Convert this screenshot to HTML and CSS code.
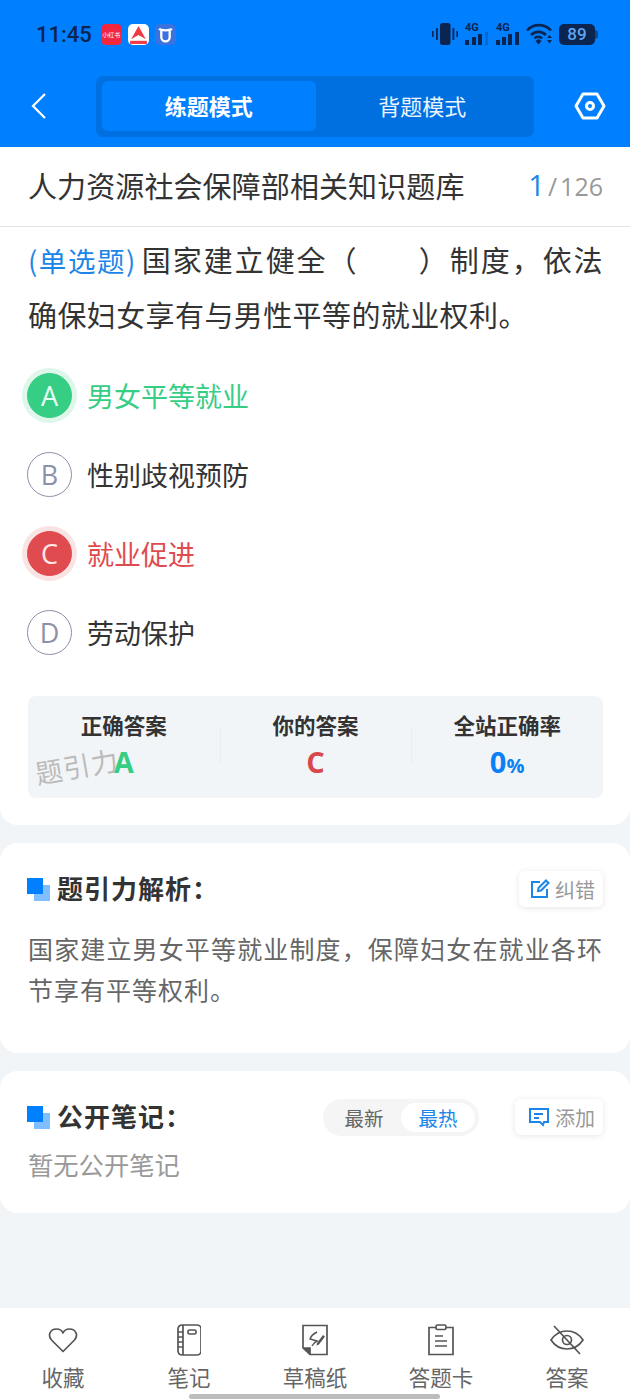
FILE: index.html
```html
<!DOCTYPE html>
<html lang="zh-CN">
<head>
    <meta charset="UTF-8">
    <meta name="viewport" content="width=device-width, initial-scale=1.0">
    <title>题引力</title>
    <link rel="stylesheet" href="styles.css">
</head>
<body>
<div class="page">
    <header class="top">
        <div class="status">
            <span class="time">11:45</span>
            <span class="app app-red">小红书</span>
            <span class="app app-white">
                <svg width="21" height="21" viewBox="0 0 20 20"><path d="M10 2 17 14.500 10 10.500 3 14.500z" fill="#ee3b46"/><rect x="2" y="16" width="16" height="3" fill="#ee3b46"/></svg>
            </span>
            <span class="app app-blue">
                <svg width="21" height="21" viewBox="0 0 20 20" fill="none" stroke="#fff" stroke-width="2.200"><path d="M6 6v6.500a4 4 0 0 0 8 0V6M4 4.500c1 1.500 3 1.500 6 1.500s5 0 6-1.500"/></svg>
            </span>
            <span class="status-right">
                <svg class="vib" width="26" height="22" viewBox="0 0 26 22" fill="#0b2450"><rect x="8" y="0" width="10.500" height="22" rx="2.500"/><rect x="0" y="8" width="1.600" height="6"/><rect x="4" y="5" width="1.800" height="12"/><rect x="20.500" y="5" width="1.800" height="12"/><rect x="24.400" y="8" width="1.600" height="6"/></svg>
                <span class="signal"><i class="g">4G</i><svg width="25" height="13" viewBox="0 0 25 13" fill="#0b2450"><rect x="1" y="8" width="4" height="5"/><rect x="8" y="5" width="4" height="8"/><rect x="14" y="2" width="4" height="11"/><rect x="21" y="0" width="3" height="13" opacity=".25"/></svg></span>
                <span class="signal"><i class="g">4G</i><svg width="25" height="13" viewBox="0 0 25 13" fill="#0b2450"><rect x="1" y="8" width="4" height="5"/><rect x="7" y="5" width="4" height="8"/><rect x="13" y="2" width="4" height="11"/><rect x="20" y="0" width="4" height="13"/></svg></span>
                <svg width="27" height="22" viewBox="0 0 27 22" fill="none" stroke="#0b2450" stroke-width="2.600"><path d="M1 7.500a16 16 0 0 1 24 0M5 12a10.500 10.500 0 0 1 15 0M8.500 15.500a5 5 0 0 1 7.500 0"/><path d="m9.500 18 3-2 3 2-3 3.500z" fill="#0b2450" stroke="none"/><path d="m21 15 2.500-3 2.500 3zM21 17h5l-2.500 3.500z" fill="#0b2450" stroke="none"/></svg>
                <span class="battery">89<i class="cap"></i></span>
            </span>
        </div>
        <nav class="nav">
            <svg class="back" width="18" height="28" viewBox="0 0 18 28" fill="none" stroke="#fff" stroke-width="2.200"><path d="M15 2 3 14l12 12"/></svg>
            <div class="tabs">
                <div class="tab tab-on">练题模式</div>
                <div class="tab">背题模式</div>
            </div>
            <svg class="gear" width="32" height="28" viewBox="0 0 32 28" fill="none" stroke="#fff" stroke-width="3"><path d="M9 2h14l7 12-7 12H9L2 14z" stroke-linejoin="round"/><circle cx="16" cy="14" r="3.500"/></svg>
        </nav>
    </header>

    <section class="card card-main">
        <div class="bank">
            <span class="bank-name">人力资源社会保障部相关知识题库</span>
            <span class="count"><b>1</b><em>/</em>126</span>
        </div>
        <p class="question"><span class="q-type">(单选题)</span>国家建立健全（&emsp;&emsp;）制度，依法确保妇女享有与男性平等的就业权利。</p>
        <ul class="options">
            <li class="option right"><span class="mark">A</span>男女平等就业</li>
            <li class="option"><span class="mark">B</span>性别歧视预防</li>
            <li class="option wrong"><span class="mark">C</span>就业促进</li>
            <li class="option"><span class="mark">D</span>劳动保护</li>
        </ul>
        <div class="result">
            <div class="cell"><div class="cell-title">正确答案</div><div class="cell-val green">A</div><span class="watermark">题引力</span></div>
            <div class="cell"><div class="cell-title">你的答案</div><div class="cell-val red">C</div></div>
            <div class="cell"><div class="cell-title">全站正确率</div><div class="cell-val blue">0<small>%</small></div></div>
        </div>
    </section>

    <section class="card card-analysis">
        <div class="head">
            <span class="squares"></span>
            <h2>题引力解析：</h2>
            <span class="mini-btn">
                <svg width="20" height="20" viewBox="0 0 20 20" fill="none" stroke="#1c86e8" stroke-width="2"><path d="M10 3H2v15h15v-8"/><path d="m8 12 .5-3L16 1.500 18.500 4 11 11.500z"/></svg>
                纠错
            </span>
        </div>
        <p class="analysis">国家建立男女平等就业制度，保障妇女在就业各环节享有平等权利。</p>
    </section>

    <section class="card card-notes">
        <div class="head">
            <span class="squares"></span>
            <h2>公开笔记：</h2>
            <div class="switch"><span>最新</span><span class="switch-on">最热</span></div>
            <span class="mini-btn">
                <svg width="22" height="20" viewBox="0 0 22 20" fill="none" stroke="#1c86e8" stroke-width="2"><path d="M2 2h18v13h-4l-1 3-3-3H2z"/><path d="M6 7h9M6 11h5"/></svg>
                添加
            </span>
        </div>
        <p class="empty">暂无公开笔记</p>
    </section>

    <footer class="bar">
        <div class="bar-item">
            <svg width="30" height="26" viewBox="0 0 30 26" fill="none" stroke="#555" stroke-width="1.700"><path d="M15 24.500 3.500 13C-.5 8.500 2 2 8.500 2c3 0 5.500 1.500 6.500 4 1-2.500 3.500-4 6.500-4 6.500 0 9 6.500 5 11z" stroke-linejoin="round"/></svg>
            <span>收藏</span>
        </div>
        <div class="bar-item">
            <svg width="24" height="32" viewBox="0 0 24 32" fill="none" stroke="#555" stroke-width="1.700"><rect x="1" y="1" width="23" height="30" rx="4"/><path d="M6 1v30M1 8h5M1 13h5M1 18h5M1 23h5"/><rect x="11" y="6" width="8" height="4" rx="1.500"/></svg>
            <span>笔记</span>
        </div>
        <div class="bar-item">
            <svg width="26" height="32" viewBox="0 0 26 32" fill="none" stroke="#555" stroke-width="1.700"><path d="M8 30.500H25V1.500H1V24z"/><path d="M1 24h7v6.500" fill="#555"/><path d="M15 8c-4 2-6 4-7 7l7 2c-2 1-4 3-5 5" stroke-width="1.400"/><path d="m15 19 6-8 2 1.500-6 8-2.500 1z" fill="#555" stroke="none"/></svg>
            <span>草稿纸</span>
        </div>
        <div class="bar-item">
            <svg width="26" height="32" viewBox="0 0 26 32" fill="none" stroke="#555" stroke-width="1.700"><path d="M8 3.500H1v27h24v-27h-7"/><rect x="8" y="1" width="10" height="4.500" rx="1.500"/><path d="M7 12h8M7 17h12M7 22h12"/></svg>
            <span>答题卡</span>
        </div>
        <div class="bar-item">
            <svg width="34" height="32" viewBox="0 0 34 32" fill="none" stroke="#555" stroke-width="1.700"><path d="M1 16c4-6 9-9 16-9s12 3 16 9c-4 6-9 9-16 9S5 22 1 16z"/><circle cx="17" cy="16" r="4.500"/><path d="M4 2l26 28"/></svg>
            <span>答案</span>
        </div>
        <div class="home-line"></div>
    </footer>
</div>
</body>
</html>
```

FILE: styles.css
```css
* {
    box-sizing: border-box;
}
html, body {
    margin: 0;
    padding: 0;
}
body {
    font-family: "Noto Sans CJK SC", "Noto Sans", sans-serif;
    background: #f2f5f8;
    color: #333;
}
.page {
    width: 630px;
    height: 1400px;
    display: flex;
    flex-direction: column;
    overflow: hidden;
}

/* top */
.top {
    height: 147px;
    background: #0080ff;
    padding: 0 25px 0 28px;
    flex-shrink: 0;
}
.status {
    height: 68px;
    display: flex;
    align-items: center;
    gap: 6px;
    color: #0b2450;
}
.time {
    font-family: Roboto, sans-serif;
    font-size: 22px;
    font-weight: 500;
    margin: 0 3px 0 8px;
}
.app {
    width: 21px;
    height: 21px;
    border-radius: 5px;
    overflow: hidden;
    display: flex;
    align-items: center;
    justify-content: center;
}
.app-red {
    background: #f3263f;
    color: #fff;
    font-size: 6px;
    white-space: nowrap;
}
.app-white {
    background: #fff;
}
.app-blue {
    background: #3a72e0;
}
.status-right {
    margin-left: auto;
    display: flex;
    align-items: center;
    gap: 6px;
    padding-right: 10px;
}
.signal {
    display: flex;
    flex-direction: column;
    align-items: flex-start;
    width: 25px;
    margin-top: -1px;
}
.signal svg {
    margin-top: -1px;
}
.g {
    font-family: Roboto, sans-serif;
    font-style: normal;
    font-weight: 700;
    font-size: 11px;
    line-height: 10px;
    margin-left: 1px;
}
.battery {
    position: relative;
    width: 36px;
    height: 21px;
    border-radius: 5px;
    background: #0b2450;
    color: #5fa6ee;
    font-family: Roboto, sans-serif;
    font-size: 17px;
    font-weight: 500;
    line-height: 21px;
    text-align: center;
}
.cap {
    position: absolute;
    right: -3px;
    top: 6px;
    width: 3px;
    height: 9px;
    border-radius: 0 3px 3px 0;
    background: #0b4a95;
}
.nav {
    display: flex;
    align-items: center;
    height: 62px;
    margin-top: 7px;
}
.back {
    margin: 0 0 0 2px;
}
.tabs {
    display: flex;
    width: 438px;
    height: 61px;
    margin-left: 48px;
    padding: 5px 5px 6px 6px;
    background: #0070e0;
    border-radius: 7px;
}
.tab {
    flex: 1;
    display: flex;
    align-items: center;
    justify-content: center;
    padding-bottom: 2px;
    color: #eaf4ff;
    font-size: 22px;
    border-radius: 6px;
}
.tab-on {
    background: #0080ff;
    color: #fff;
    font-weight: 700;
}
.gear {
    margin-left: auto;
    margin-right: -1px;
}

/* cards */
.card {
    background: #fff;
    flex-shrink: 0;
}
.card-main {
    height: 678px;
    border-radius: 0 0 18px 18px;
    padding: 0 27px 0 28px;
}
.bank {
    display: flex;
    align-items: center;
    justify-content: space-between;
    height: 80px;
    margin: 0 -27px 0 -28px;
    padding: 0 27px 4px 28px;
    border-bottom: 1px solid #e4e4e4;
}
.bank-name {
    font-size: 29px;
    letter-spacing: 0.100px;
    color: #333;
}
.count {
    font-family: "Open Sans", sans-serif;
    font-size: 25px;
    color: #999;
}
.count b {
    font-weight: 400;
    font-size: 29px;
    color: #1c86e8;
}
.count em {
    font-style: normal;
    margin: 0 3px;
}
.question {
    margin: 5px 0 0;
    font-size: 29px;
    letter-spacing: 0.400px;
    line-height: 54px;
    text-align: justify;
    color: #333;
}
.q-type {
    font-size: 27.500px;
    letter-spacing: 0;
    color: #1c86e8;
    margin-right: 5px;
}
.options {
    list-style: none;
    margin: 15px 0 0;
    padding: 0;
}
.option {
    display: flex;
    align-items: center;
    gap: 15px;
    height: 79px;
    font-size: 27px;
    color: #333;
}
.mark {
    width: 45px;
    height: 45px;
    margin-left: -1px;
    border-radius: 50%;
    border: 1px solid #8d90aa;
    color: #8d90aa;
    font-family: "Open Sans", sans-serif;
    font-size: 27px;
    display: flex;
    align-items: center;
    justify-content: center;
}
.right {
    color: #36cd85;
}
.right .mark {
    background: #36cd85;
    border-color: #36cd85;
    color: #e8fff4;
    box-shadow: 0 0 0 5px #dff7eb;
}
.wrong {
    color: #e04b4f;
}
.wrong .mark {
    background: #e04b4f;
    border-color: #e04b4f;
    color: #ffe9e9;
    box-shadow: 0 0 0 5px #fae3e3;
}
.result {
    display: flex;
    height: 102px;
    margin-top: 24px;
    background: #f2f5f8;
    border-radius: 8px;
}
.cell {
    flex: 1;
    position: relative;
    text-align: center;
    padding-top: 14px;
}
.cell + .cell::before {
    content: "";
    position: absolute;
    left: 0;
    top: 32px;
    height: 36px;
    border-left: 1px solid #e9ecef;
}
.cell-title {
    font-size: 21.500px;
    line-height: 30px;
    font-weight: 700;
    color: #333;
}
.cell-val {
    font-family: "Open Sans", sans-serif;
    font-size: 29px;
    line-height: 36px;
    margin-top: 4px;
    font-weight: 700;
}
.cell-val small {
    font-size: 20px;
}
.green {
    color: #36cd85;
}
.red {
    color: #d9474b;
}
.blue {
    color: #0a80f5;
}
.watermark {
    position: absolute;
    left: 7px;
    top: 54px;
    font-size: 27px;
    line-height: 32px;
    color: #bbb;
    letter-spacing: 1px;
    transform: rotate(-10deg);
}
.card-analysis {
    margin-top: 18px;
    height: 210px;
    border-radius: 18px;
    padding: 27px 27px 0 28px;
}
.card-notes {
    margin-top: 18px;
    height: 142px;
    border-radius: 18px;
    padding: 27px 27px 0 28px;
}
.head {
    display: flex;
    align-items: center;
    height: 38px;
}
.squares {
    width: 23px;
    height: 23px;
    margin-left: -1px;
    position: relative;
    background: linear-gradient(#7fbfff, #7fbfff) 7px 7px / 16px 16px no-repeat;
    margin-right: 7px;
}
.squares::before {
    content: "";
    position: absolute;
    left: 0;
    top: 0;
    width: 16px;
    height: 16px;
    background: #0080ff;
}
.head h2 {
    margin: 0 0 4px;
    font-size: 26px;
    font-weight: 700;
    color: #333;
    letter-spacing: 1px;
}
.mini-btn {
    margin-left: auto;
    display: flex;
    align-items: center;
    gap: 5px;
    height: 36px;
    padding: 0 8px 0 11px;
    font-size: 20px;
    color: #999;
    border-radius: 6px;
    box-shadow: 0 1px 6px rgba(0, 0, 0, 0.1);
}
.analysis {
    margin: 20px 0 0;
    font-size: 25px;
    letter-spacing: 1px;
    line-height: 41px;
    text-align: justify;
    color: #666;
}
.switch {
    display: flex;
    align-items: center;
    margin-left: auto;
    width: 156px;
    height: 37px;
    padding: 4px;
    background: #f5f5f5;
    border-radius: 19px;
    font-size: 19.500px;
    color: #666;
}
.switch span {
    flex: 1;
    text-align: center;
}
.switch-on {
    background: #fff;
    color: #1c86e8;
    border-radius: 15px;
    line-height: 29px;
}
.switch + .mini-btn {
    margin-left: 36px;
    padding-left: 13px;
}
.empty {
    margin: 11px 0 0;
    font-size: 25.300px;
    line-height: 34px;
    color: #999;
}

/* bottom */
.bar {
    margin-top: auto;
    height: 92px;
    background: #fff;
    display: flex;
    justify-content: space-between;
    padding: 16px 0 0;
    position: relative;
    flex-shrink: 0;
}
.bar-item {
    width: 126px;
    display: flex;
    flex-direction: column;
    align-items: center;
    color: #666;
    font-size: 21.500px;
    line-height: 30px;
    gap: 6px;
}
.bar-item svg {
    height: 32px;
}
.home-line {
    position: absolute;
    left: 189px;
    bottom: 1px;
    width: 251px;
    height: 5px;
    border-radius: 3px;
    background: #bdbdbd;
}
```
